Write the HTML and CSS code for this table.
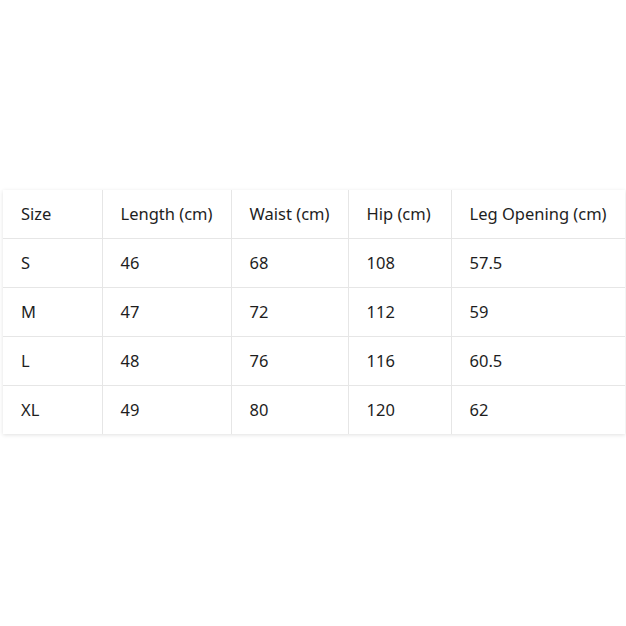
FILE: index.html
```html
<!DOCTYPE html>
<html lang="en">
<head>
<meta charset="utf-8">
<title>Size Chart</title>
<link rel="stylesheet" href="styles.css">
</head>
<body>
<main class="page">
  <table class="size-table">
    <colgroup>
      <col class="c1"><col class="c2"><col class="c3"><col class="c4"><col class="c5">
    </colgroup>
    <thead>
      <tr><th>Size</th><th>Length (cm)</th><th>Waist (cm)</th><th>Hip (cm)</th><th>Leg Opening (cm)</th></tr>
    </thead>
    <tbody>
      <tr><td>S</td><td>46</td><td>68</td><td>108</td><td>57.5</td></tr>
      <tr><td>M</td><td>47</td><td>72</td><td>112</td><td>59</td></tr>
      <tr><td>L</td><td>48</td><td>76</td><td>116</td><td>60.5</td></tr>
      <tr><td>XL</td><td>49</td><td>80</td><td>120</td><td>62</td></tr>
    </tbody>
  </table>
</main>
</body>
</html>
```
FILE: styles.css
```css
html, body {
  margin: 0;
  padding: 0;
  background: #ffffff;
}
.page {
  height: 626px;
  display: flex;
  align-items: center;
  justify-content: center;
  padding: 0 1px 2px 3px;
  box-sizing: border-box;
}
.size-table {
  width: 100%;
  border-collapse: collapse;
  table-layout: fixed;
  font-family: "Noto Sans", "Open Sans", sans-serif;
  font-size: 16.5px;
  color: #1e1e1e;
  background: #ffffff;
  box-shadow: 0 1px 4px rgba(0, 0, 0, 0.12);
}
.c1 { width: 99px; }
.c2 { width: 129px; }
.c3 { width: 117px; }
.c4 { width: 103px; }
.c5 { width: auto; }
.size-table th,
.size-table td {
  text-align: left;
  font-weight: normal;
  padding: 0 18px;
  height: 48px;
  line-height: 20px;
  border: 1px solid #e6e6e6;
}
.size-table tr:first-child th { border-top: none; }
.size-table tr:last-child td { border-bottom: none; }
.size-table tr > :first-child { border-left: none; }
.size-table tr > :last-child { border-right: none; }
```
